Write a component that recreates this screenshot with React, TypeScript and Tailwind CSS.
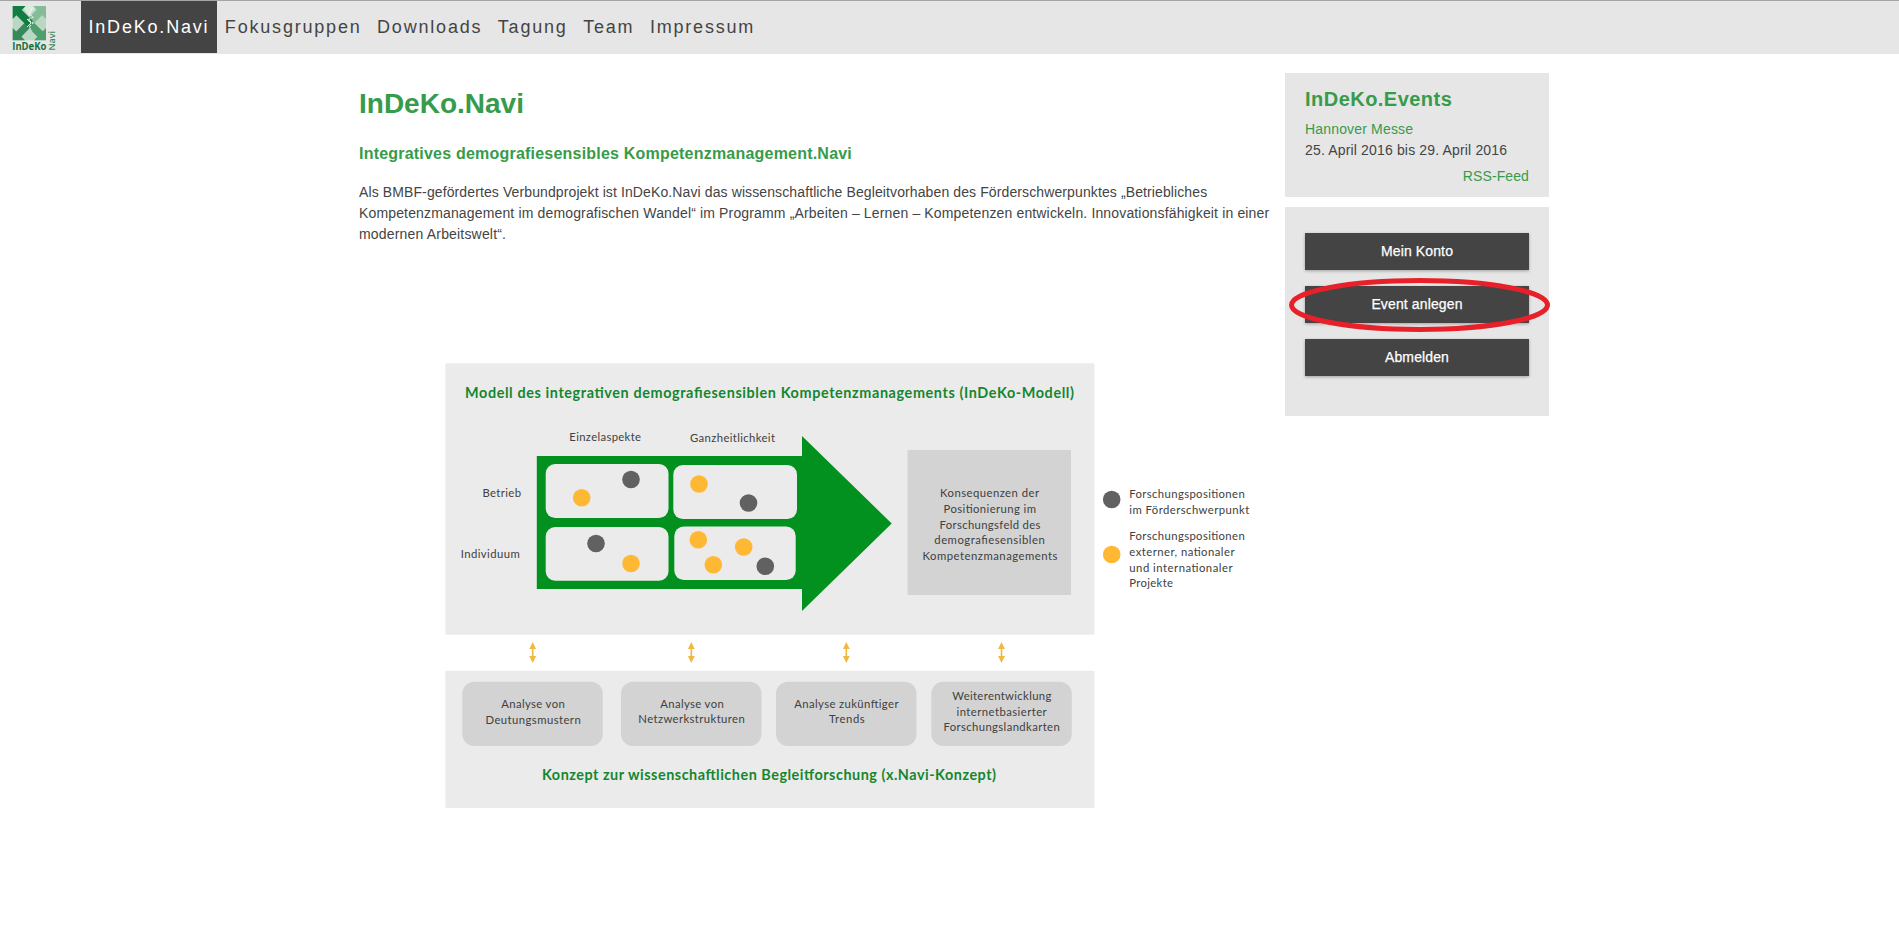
import React from "react";

const NAV = ["InDeKo.Navi", "Fokusgruppen", "Downloads", "Tagung", "Team", "Impressum"];

const GREY = "#616161";
const AMBER = "#ffb833";

type Label = { t: string; x1: number; x2: number; y: number };

const LABELS: Label[] = [
  { t: "Einzelaspekte", x1: 569.3, x2: 641, y: 441 },
  { t: "Ganzheitlichkeit", x1: 690, x2: 775, y: 442 },
  { t: "Betrieb", x1: 482.5, x2: 521, y: 497 },
  { t: "Individuum", x1: 460.7, x2: 519.7, y: 558 },
  { t: "Konsequenzen der", x1: 940, x2: 1039, y: 497 },
  { t: "Positionierung im", x1: 943.5, x2: 1036, y: 513 },
  { t: "Forschungsfeld des", x1: 939.5, x2: 1040.5, y: 529 },
  { t: "demografiesensiblen", x1: 934.3, x2: 1044.7, y: 544 },
  { t: "Kompetenzmanagements", x1: 922.5, x2: 1057.5, y: 560 },
  { t: "Forschungspositionen", x1: 1129.3, x2: 1244.7, y: 498 },
  { t: "im Förderschwerpunkt", x1: 1129.3, x2: 1249.3, y: 514 },
  { t: "Forschungspositionen", x1: 1129.3, x2: 1244.7, y: 540 },
  { t: "externer, nationaler", x1: 1129.3, x2: 1234.5, y: 556 },
  { t: "und internationaler", x1: 1129.3, x2: 1232.5, y: 572 },
  { t: "Projekte", x1: 1129.3, x2: 1173, y: 587 },
  { t: "Analyse von", x1: 501.3, x2: 564.7, y: 708 },
  { t: "Deutungsmustern", x1: 485.5, x2: 580.7, y: 724 },
  { t: "Analyse von", x1: 660.3, x2: 723.7, y: 708 },
  { t: "Netzwerkstrukturen", x1: 638.3, x2: 744.7, y: 723 },
  { t: "Analyse zukünftiger", x1: 794.3, x2: 898.5, y: 708 },
  { t: "Trends", x1: 829, x2: 864.7, y: 723 },
  { t: "Weiterentwicklung", x1: 952.3, x2: 1051.3, y: 700 },
  { t: "internetbasierter", x1: 956.5, x2: 1046.7, y: 716 },
  { t: "Forschungslandkarten", x1: 943.5, x2: 1059.7, y: 731 },
];

const DOTS: [number, number, string][] = [
  [581.7, 497.7, AMBER],
  [631, 479.5, GREY],
  [699, 484, AMBER],
  [748.5, 503, GREY],
  [596, 543.5, GREY],
  [631, 563.5, AMBER],
  [698.3, 539.7, AMBER],
  [743.7, 547, AMBER],
  [713.3, 564.7, AMBER],
  [765.3, 566.3, GREY],
  [1111.7, 499.5, GREY],
  [1111.7, 554.5, AMBER],
];

const CELLS: [number, number, number, number][] = [
  [545.7, 464, 122.8, 54],
  [673.3, 465, 123.7, 54],
  [545.7, 527, 122.8, 53.7],
  [674.3, 526.5, 121.4, 53.5],
];

function Logo() {
  return (
    <svg width="46" height="50" viewBox="11 3 46 50" className="block">
      <rect x="12.7" y="6" width="33.3" height="34.3" fill="#b9d8c3" />
      <path d="M22 6h15l-8 10z" fill="#d9eadf" />
      <g strokeWidth="7.5" fill="none">
        <path d="M42 10L29 23" stroke="#86bb98" />
        <path d="M42 36L29 23" stroke="#4f9f6e" />
        <path d="M17 36L30 22.500" stroke="#35895a" />
        <path d="M16 9.500L30 23.500" stroke="#137c40" />
      </g>
      <path d="M46 6v13L33 6z" fill="#86bb98" />
      <path d="M46 40.300V28L34 40.300z" fill="#4f9f6e" />
      <path d="M12.700 40.300V28L25 40.300z" fill="#35895a" />
      <path d="M12.700 6h13L12.700 19z" fill="#137c40" />
      <path d="M32 8l-3 6 4 3-5 3 5 3-4 4 3 4" fill="none" stroke="#eef6f0" strokeWidth="1.1" strokeDasharray="2.5 1.2" />
      <path d="M27 19l4 4-4 4" fill="none" stroke="#e4f1e8" strokeWidth="1" />
      <text x="12.3" y="50" fontSize="10" fontWeight="700" fill="#14713c" textLength="34" lengthAdjust="spacingAndGlyphs">
        InDeKo
      </text>
      <text transform="translate(55 50.5) rotate(-90)" fontSize="9.5" fontWeight="600" fill="#3b8a5c" textLength="19.500" lengthAdjust="spacingAndGlyphs">
        Navi
      </text>
    </svg>
  );
}

function Diagram() {
  return (
    <svg width="815" height="450" viewBox="445 361 815 450" className="block font-[Lato,sans-serif]">
      <rect x="445.3" y="363.3" width="649.2" height="271.4" rx="1.5" fill="#ebebeb" />
      <rect x="445.3" y="670.7" width="649.2" height="137.3" rx="1.5" fill="#ebebeb" />
      <path d="M536.8 456H802V436L891.7 523.5 802 611V589H536.8z" fill="#02901f" />
      {CELLS.map(([x, y, w, h]) => (
        <rect key={`${x}-${y}`} x={x} y={y} width={w} height={h} rx="9.5" fill="#ebebeb" />
      ))}
      <rect x="907.5" y="450" width="163.5" height="145" rx="1" fill="#d3d3d3" />
      {[462.3, 621, 776, 931.3].map((x) => (
        <rect key={x} x={x} y="681.7" width="140.5" height="64.3" rx="12" fill="#d3d3d3" />
      ))}
      {[532.7, 691.3, 846.3, 1001.5].map((x) => (
        <g key={x} transform={`translate(${x} 642)`} fill="#f0b840">
          <path d="M0 0L3.400 7H-3.400zM0 21L3.400 14H-3.400z" />
          <rect x="-0.8" y="6" width="1.6" height="9" />
        </g>
      ))}
      {DOTS.map(([x, y, c]) => (
        <circle key={`${x}-${y}`} cx={x} cy={y} r="8.8" fill={c} />
      ))}
      {LABELS.map((l) => (
        <text key={`${l.x1}-${l.y}`} x={l.x1} y={l.y} fontSize="11.3" fill="#404040" textLength={l.x2 - l.x1}>
          {l.t}
        </text>
      ))}
      <g fontSize="14.4" fontWeight="700" fill="#15862f">
        <text x="465" y="398" textLength="609">
          Modell des integrativen demografiesensiblen Kompetenzmanagements (InDeKo-Modell)
        </text>
        <text x="542" y="780" textLength="454">
          Konzept zur wissenschaftlichen Begleitforschung (x.Navi-Konzept)
        </text>
      </g>
    </svg>
  );
}

export default function App() {
  return (
    <div className="h-[933px] w-full overflow-hidden bg-white font-['Liberation_Sans',Arial,sans-serif] text-sm leading-[21px] text-[#444]">
      <header className="flex h-[54px] border-t border-[#a6a6a6] bg-[#e6e6e6]">
        <div className="w-[81px] pt-0.5 pl-[11px] font-['Open_Sans',sans-serif]">
          <Logo />
        </div>
        <nav className="flex">
          {NAV.map((n, i) => (
            <a
              key={n}
              className={
                i === 0
                  ? "h-[52px] bg-[#444] px-[7.5px] text-lg leading-[52px] tracking-[0.1em] text-white"
                  : "h-[52px] pr-[7.5px] pl-2 text-lg leading-[52px] tracking-[0.1em]"
              }
            >
              {n}
            </a>
          ))}
        </nav>
      </header>
      <div className="flex pl-[359px]">
        <main className="w-[926px]">
          <h1 className="mt-[33px] text-[28px] leading-[34px] font-bold text-[#369b4b]">InDeKo.Navi</h1>
          <h2 className="mt-[21px] text-base leading-6 font-bold tracking-[0.21px] text-[#369b4b]">
            Integratives demografiesensibles Kompetenzmanagement.Navi
          </h2>
          <p className="mt-4 whitespace-nowrap">
            <span className="tracking-[0.11px]">
              Als BMBF-gefördertes Verbundprojekt ist InDeKo.Navi das wissenschaftliche Begleitvorhaben des
              Förderschwerpunktes „Betriebliches
            </span>
            <br />
            <span className="tracking-[0.15px]">
              Kompetenzmanagement im demografischen Wandel“ im Programm „Arbeiten – Lernen – Kompetenzen
              entwickeln. Innovationsfähigkeit in einer
            </span>
            <br />
            <span className="tracking-[0.18px]">modernen Arbeitswelt“.</span>
          </p>
          <div className="mt-[116px] ml-[86px]">
            <Diagram />
          </div>
        </main>
        <aside className="mt-[19px] flex w-[264px] flex-col gap-2.5">
          <section className="h-[124px] bg-[#e6e6e6] px-5 pt-[13px]">
            <h3 className="text-xl leading-[26px] font-bold tracking-[0.47px] text-[#369b4b]">InDeKo.Events</h3>
            <p className="mt-[7px] tracking-[0.17px] text-[#369b4b]">Hannover Messe</p>
            <p className="tracking-[0.16px]">25. April 2016 bis 29. April 2016</p>
            <p className="mt-[5px] text-right tracking-[0.1px] text-[#369b4b]">RSS-Feed</p>
          </section>
          <section className="relative flex h-[209px] flex-col gap-4 bg-[#e6e6e6] px-5 pt-[26px]">
            {["Mein Konto", "Event anlegen", "Abmelden"].map((b) => (
              <button
                key={b}
                className="h-[37px] bg-[#444] tracking-[0.13px] text-white shadow-[0_1px_3px_rgba(0,0,0,0.3)] [-webkit-text-stroke:0.25px_white]"
              >
                {b}
              </button>
            ))}
            <svg className="absolute top-[71px] left-1" width="262" height="54" viewBox="0 0 262 54">
              <ellipse cx="130.5" cy="27" rx="128" ry="24.5" fill="none" stroke="#e8202a" strokeWidth="5" />
            </svg>
          </section>
        </aside>
      </div>
    </div>
  );
}
